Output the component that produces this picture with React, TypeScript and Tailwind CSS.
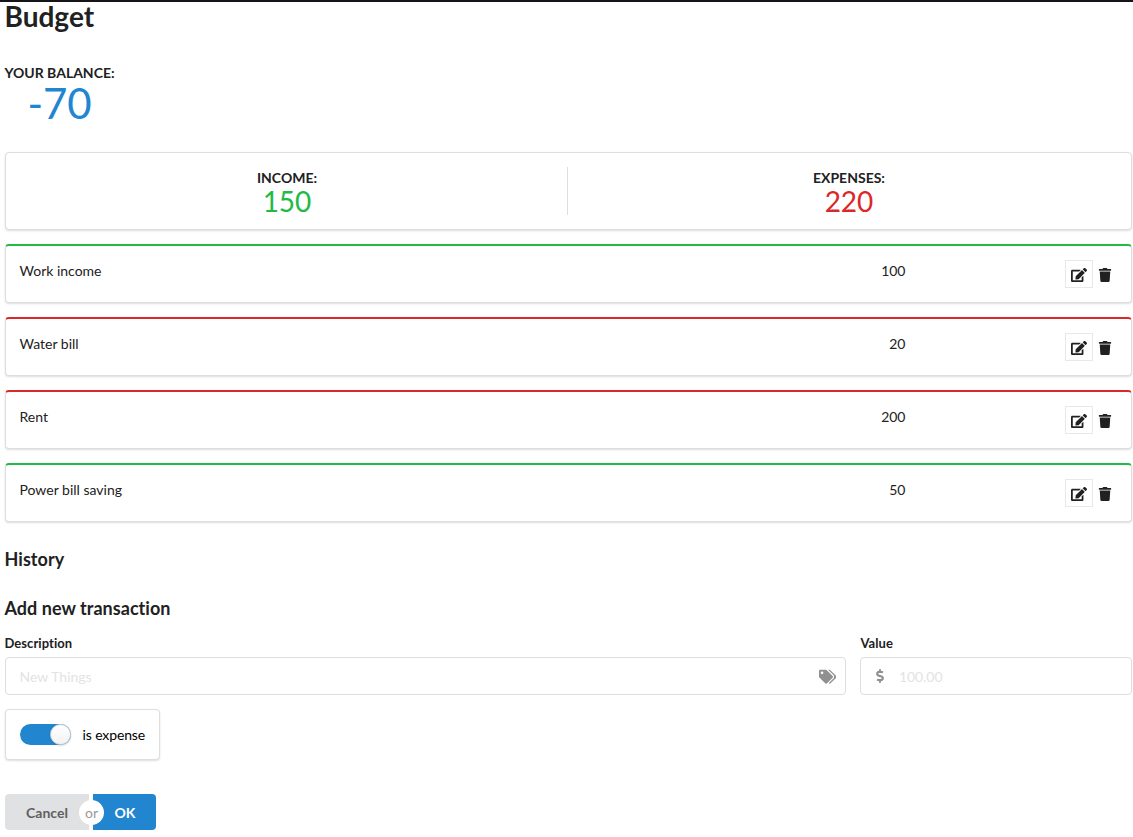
import React from "react";
import { FaDollarSign, FaEdit, FaTags, FaTrash } from "react-icons/fa";

type Entry = { description: string; value: string; isExpense: boolean };

const entries: Entry[] = [
  { description: "Work income", value: "100", isExpense: false },
  { description: "Water bill", value: "20", isExpense: true },
  { description: "Rent", value: "200", isExpense: true },
  { description: "Power bill saving", value: "50", isExpense: false },
];

const segment =
  "rounded-[4px] border border-[#dededf] bg-white shadow-[0_1px_2px_0_rgba(34,36,38,0.15)]";

function EntryLine({ description, value, isExpense }: Entry) {
  return (
    <div
      className={`${segment} flex h-[59px] border-t-2 pl-[13.5px] pt-[14px] ${
        isExpense ? "border-t-[#db2828]" : "border-t-[#21ba45]"
      }`}
    >
      <div className="w-[686px] leading-[22px]">{description}</div>
      <div className="w-[200px] text-right leading-[22px]">{value}</div>
      <div className="ml-[159.5px] flex h-[28px] items-center">
        <button className="flex size-[28px] items-center justify-center border border-[#e8e8e9]">
          <FaEdit size={16} className="mt-px" />
        </button>
        <button className="ml-[4.5px] mt-px">
          <FaTrash size={14} />
        </button>
      </div>
    </div>
  );
}

function Summary({ label, value, color }: { label: string; value: string; color: string }) {
  return (
    <div className="flex h-[48px] flex-1 flex-col items-center pl-px">
      <div className="mt-[4px] font-bold uppercase leading-[14px]">{label}</div>
      <div className={`mt-[2px] text-[28px] leading-[28px] ${color}`}>{value}</div>
    </div>
  );
}

export default function App() {
  return (
    <div className="h-[837px] overflow-hidden border-t-2 border-[#15141a] bg-white pl-[5px] pr-px font-['Lato',sans-serif] text-[14px] text-[#212121] [font-variant-ligatures:none]">
      <h1 className="-ml-[0.5px] -mt-[4px] text-[28px] font-bold leading-[36px]">Budget</h1>
      <div className="-ml-[0.5px] mt-[32px] inline-flex flex-col items-center">
        <div className="font-bold uppercase leading-[14px]">Your Balance:</div>
        <div className="mt-[2px] text-[42px] leading-[42px] text-[#2185d0]">-70</div>
      </div>

      <div className={`${segment} mt-[28px] flex h-[78px] py-[14px] pr-[2px]`}>
        <Summary label="Income:" value="150" color="text-[#21ba45]" />
        <div className="w-px bg-[#dededf]" />
        <Summary label="Expenses:" value="220" color="text-[#db2828]" />
      </div>

      <div className="mt-[14px] flex flex-col gap-[14px]">
        {entries.map((entry) => (
          <EntryLine key={entry.description} {...entry} />
        ))}
      </div>

      <h3 className="-ml-[0.5px] mt-[25px] text-[18px] font-bold leading-[24px] tracking-[0.04px]">
        History
      </h3>
      <h3 className="-ml-[0.5px] mt-[25px] text-[18px] font-bold leading-[24px] tracking-[0.04px]">
        Add new transaction
      </h3>

      <form>
        <div className="mt-[14px] flex gap-[14px]">
          <label className="w-[841px] text-[13px] font-bold leading-[18px]">
            <span className="-ml-[0.5px] block tracking-[0.05px]">Description</span>
            <span className="mt-[5px] flex h-[38px] items-center rounded-[4px] border border-[#dededf] pl-[13.5px] pr-[9px] text-[14px] font-normal">
              <input
                className="mt-px min-w-0 flex-1 outline-none placeholder:text-[#e3e3e3]"
                placeholder="New Things"
              />
              <FaTags size={17.5} className="mt-px text-[#909090]" />
            </span>
          </label>
          <label className="w-[272px] text-[13px] font-bold leading-[18px]">
            <span className="block pl-[0.5px] tracking-[0.05px]">Value</span>
            <span className="mt-[5px] flex h-[38px] items-center rounded-[4px] border border-[#dededf] pl-[12px] text-[14px] font-normal">
              <FaDollarSign size={14} className="text-[#909090]" />
              <input
                className="ml-[12px] mt-px min-w-0 flex-1 tracking-[-0.08px] outline-none placeholder:text-[#e3e3e3]"
                placeholder="100.00"
              />
            </span>
          </label>
        </div>

        <div className={`${segment} mt-[14px] flex h-[51px] w-[155px] items-center pl-[14px]`}>
          <div className="flex h-[21px] w-[51px] justify-end rounded-full bg-[#2185d0]">
            <div className="size-[21px] rounded-full border border-[#d4d4d5] bg-gradient-to-b from-white to-[#f2f2f2] shadow-[0_1px_2px_0_rgba(34,36,38,0.15)]" />
          </div>
          <span className="ml-[11.5px] tracking-[-0.12px] text-black">is expense</span>
        </div>

        <div className="mt-[34px] flex h-[36px] font-bold">
          <button
            type="button"
            className="w-[84px] rounded-l-[4px] bg-[#e0e1e2] text-[#5f5f60]"
          >
            Cancel
          </button>
          <div className="relative w-[4px]">
            <span className="absolute -left-[10px] top-[6px] flex size-[25px] items-center justify-center rounded-full bg-white font-normal text-[#999999]">
              or
            </span>
          </div>
          <button type="button" className="w-[63px] rounded-r-[4px] bg-[#2185d0] pl-px text-white">
            OK
          </button>
        </div>
      </form>
    </div>
  );
}
